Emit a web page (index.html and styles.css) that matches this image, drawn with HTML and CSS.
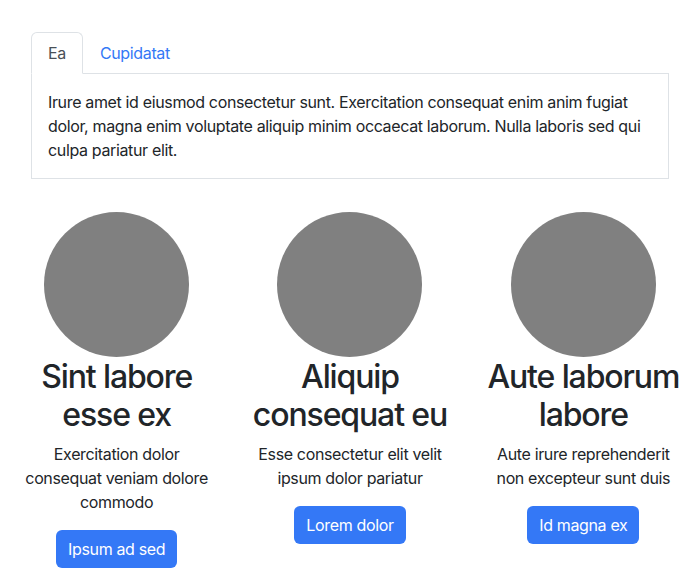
FILE: index.html
```html
<!DOCTYPE html>
<html lang="en">
<head>
<meta charset="utf-8">
<title>Tabs and features</title>
<link rel="stylesheet" href="styles.css">
</head>
<body>
<div class="tabs-wrap">
  <ul class="nav-tabs">
    <li><a class="tab active" href="#">Ea</a></li>
    <li><a class="tab" href="#">Cupidatat</a></li>
  </ul>
  <div class="tab-pane">
    <p>Irure amet id eiusmod consectetur sunt. Exercitation consequat enim anim fugiat dolor, magna enim voluptate aliquip minim occaecat laborum. Nulla laboris sed qui culpa pariatur elit.</p>
  </div>
</div>
<div class="features">
  <div class="feature">
    <div class="circle"></div>
    <h2>Sint labore esse ex</h2>
    <p>Exercitation dolor consequat veniam dolore commodo</p>
    <a class="btn" href="#">Ipsum ad sed</a>
  </div>
  <div class="feature">
    <div class="circle"></div>
    <h2>Aliquip consequat eu</h2>
    <p>Esse consectetur elit velit ipsum dolor pariatur</p>
    <a class="btn" href="#">Lorem dolor</a>
  </div>
  <div class="feature">
    <div class="circle"></div>
    <h2>Aute laborum labore</h2>
    <p>Aute irure reprehenderit non excepteur sunt duis</p>
    <a class="btn" href="#">Id magna ex</a>
  </div>
</div>
</body>
</html>
```

FILE: styles.css
```css
* { box-sizing: border-box; }
html, body { margin: 0; padding: 0; }
body {
  font-family: Inter, "Noto Sans", "Liberation Sans", sans-serif;
  font-size: 16px;
  line-height: 24px;
  letter-spacing: -0.022em;
  color: #212529;
  background: #fff;
}
.tabs-wrap {
  padding: 32px 31px 0;
}
.nav-tabs {
  list-style: none;
  margin: 0;
  padding: 0;
  display: flex;
  border-bottom: 1px solid #dee2e6;
}
.tab {
  display: block;
  padding: 8px 16px;
  margin-bottom: -1px;
  border: 1px solid transparent;
  border-top-left-radius: 6px;
  border-top-right-radius: 6px;
  color: #3478f6;
  text-decoration: none;
}
.tab.active {
  color: #495057;
  background: #fff;
  border-color: #dee2e6 #dee2e6 #fff;
}
.tab-pane {
  border: 1px solid #dee2e6;
  border-top: 0;
  padding: 16px;
}
.tab-pane p { margin: 0; }
.features {
  display: grid;
  grid-template-columns: repeat(3, 1fr);
  margin-top: 33px;
}
.feature {
  padding: 0 16px;
  text-align: center;
}
.circle {
  width: 145px;
  height: 145px;
  border-radius: 50%;
  background: #808080;
  margin: 0 auto 1px;
}
.feature h2 {
  font-size: 32px;
  font-weight: 500;
  line-height: 38px;
  letter-spacing: -0.035em;
  margin: 0 -4px 8px;
}
.feature p {
  margin: 0 0 16px;
}
.btn {
  display: inline-block;
  padding: 7px 12px;
  border-radius: 6px;
  background: #3478f6;
  color: #fff;
  text-decoration: none;
  line-height: 24px;
}
```
